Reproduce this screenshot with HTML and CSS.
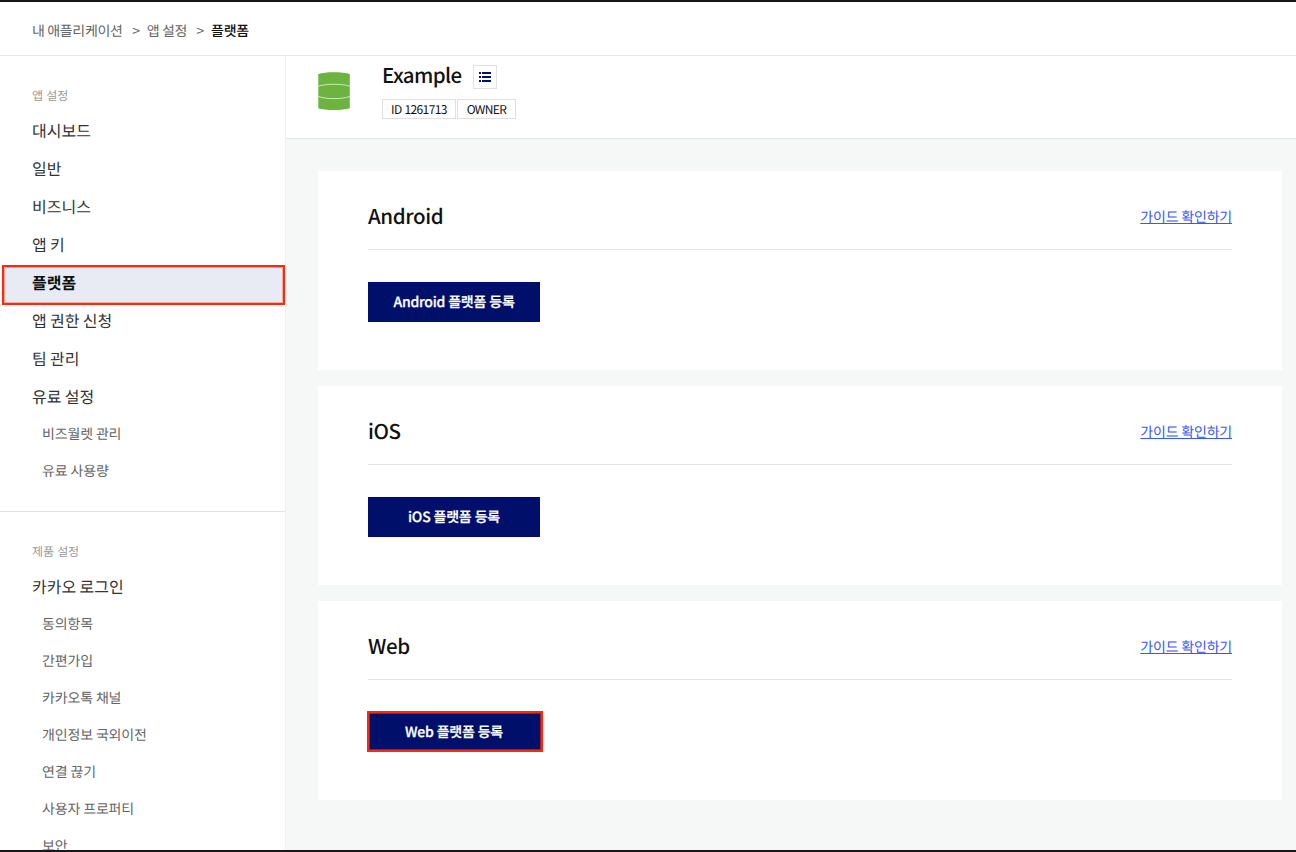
FILE: index.html
```html
<!DOCTYPE html>
<html lang="ko">
<head>
<meta charset="utf-8">
<title>플랫폼</title>
<link rel="stylesheet" href="styles.css">
</head>
<body>
<div class="page">
  <nav class="crumbs">
    <span>내 애플리케이션</span><span class="sep">&gt;</span><span>앱 설정</span><span class="sep">&gt;</span><span class="here">플랫폼</span>
  </nav>
  <div class="body">
    <aside class="side">
      <section class="group">
        <h2 class="label">앱 설정</h2>
        <a class="item">대시보드</a>
        <a class="item">일반</a>
        <a class="item">비즈니스</a>
        <a class="item">앱 키</a>
        <a class="item active"><span>플랫폼</span></a>
        <a class="item">앱 권한 신청</a>
        <a class="item">팀 관리</a>
        <a class="item">유료 설정</a>
        <a class="sub">비즈월렛 관리</a>
        <a class="sub">유료 사용량</a>
      </section>
      <section class="group">
        <h2 class="label">제품 설정</h2>
        <a class="item">카카오 로그인</a>
        <a class="sub">동의항목</a>
        <a class="sub">간편가입</a>
        <a class="sub">카카오톡 채널</a>
        <a class="sub">개인정보 국외이전</a>
        <a class="sub">연결 끊기</a>
        <a class="sub">사용자 프로퍼티</a>
        <a class="sub">보안</a>
      </section>
    </aside>
    <main class="main">
      <header class="app">
        <svg class="logo" width="32" height="40" viewBox="0 0 32 40">
          <path d="M0.3 3C7 .5 25 .5 31.8 3V37.2C25 39.6 7 39.6 0.3 37.2Z" fill="#6cb33f"/>
          <path d="M0.3 15.2C8 12.6 24 12.6 31.8 15.2M0.3 25.4C8 28.4 24 28.4 31.8 25.4" fill="none" stroke="#d3e8c6" stroke-width="1"/>
        </svg>
        <div class="info">
          <div class="name-row">
            <h1 class="name">Example</h1>
            <span class="list-btn">
              <svg width="12" height="10" viewBox="0 0 12 10" fill="#000f69">
                <path d="M0 0h2v2H0zM3 0h9v2H3zM0 4h2v2H0zM3 4h9v2H3zM0 8h2v2H0zM3 8h9v2H3z"/>
              </svg>
            </span>
          </div>
          <div class="tags"><span class="tag tag-id">ID 1261713</span><span class="tag tag-role">OWNER</span></div>
        </div>
      </header>
      <div class="cards">
        <section class="card">
          <div class="card-head"><h2 class="title">Android</h2><a class="guide">가이드 확인하기</a></div>
          <button class="btn">Android 플랫폼 등록</button>
        </section>
        <section class="card">
          <div class="card-head"><h2 class="title">iOS</h2><a class="guide">가이드 확인하기</a></div>
          <button class="btn">iOS 플랫폼 등록</button>
        </section>
        <section class="card">
          <div class="card-head"><h2 class="title">Web</h2><a class="guide">가이드 확인하기</a></div>
          <button class="btn marked">Web 플랫폼 등록</button>
        </section>
      </div>
    </main>
  </div>
</div>
</body>
</html>
```
FILE: styles.css
```css
*, *::before, *::after { box-sizing: border-box; }
body {
  margin: 0;
  font-family: "Noto Sans CJK KR", sans-serif;
  text-rendering: geometricPrecision;
  color: #111;
  background: #fff;
}
h1, h2 { margin: 0; font-weight: 500; }
.page {
  display: flex;
  flex-direction: column;
  height: 852px;
  overflow: hidden;
  border-top: 2px solid #1a1718;
  border-bottom: 2px solid #1a1718;
}
.crumbs {
  display: flex;
  align-items: center;
  flex: 0 0 54px;
  padding: 5px 32px 0;
  border-bottom: 1px solid #e8e8e8;
  font-size: 14px;
  letter-spacing: -0.3px;
  word-spacing: -1px;
  color: #666;
}
.sep { width: 24px; padding-left: 9.5px; }
.here { color: #111; font-weight: 500; }
.body { display: flex; flex: 1; min-height: 0; }
.side {
  flex: 0 0 286px;
  overflow: hidden;
  border-right: 1px solid #eff0f0;
}
.group { display: flex; flex-direction: column; padding-bottom: 22px; }
.group + .group { border-top: 1px solid #e1e1e1; }
.label {
  padding: 30px 32px 5px;
  line-height: 20px;
  font-size: 12px;
  letter-spacing: -0.1px;
  font-weight: 400;
  color: #999;
}
.item {
  height: 38px;
  padding-left: 32px;
  line-height: 39px;
  font-size: 16px;
  word-spacing: -1.2px;
  color: #333;
}
.sub {
  height: 37px;
  padding-left: 42px;
  line-height: 39px;
  font-size: 14px;
  letter-spacing: -0.15px;
  word-spacing: -0.8px;
  color: #666;
}
.active { position: relative; font-weight: 700; color: #111; }
.active span { position: relative; }
.active::before {
  content: "";
  position: absolute;
  left: 2px;
  top: 2px;
  width: 283px;
  height: 40px;
  border: 2px solid #fb2a0c;
  box-shadow: inset 0 0 0 1px rgba(251, 42, 12, 0.35);
  background: #e9ebf4;
}
.main { display: flex; flex-direction: column; flex: 1; background: #f6f8f8; }
.app {
  display: flex;
  gap: 32px;
  height: 83px;
  padding: 6px 32px 0;
  background: #fff;
  border-bottom: 1px solid #e3e4e4;
}
.logo { margin-top: 9px; }
.name-row { display: flex; gap: 11px; }
.name { width: 80px; font-size: 20.5px; line-height: 24px; letter-spacing: -0.6px; }
.list-btn {
  display: grid;
  place-items: center;
  width: 24px;
  height: 24px;
  margin-top: 3px;
  border: 1px solid #e1e1e1;
}
.tags { display: flex; gap: 1px; margin-top: 10px; }
.tag {
  height: 20px;
  padding-top: 1px;
  border: 1px solid #dfdfdf;
  line-height: 18px;
  font-size: 12px;
  letter-spacing: -0.6px;
  text-align: center;
  color: #111;
}
.tag-id { width: 74px; }
.tag-role { width: 59px; }
.cards { display: flex; flex-direction: column; gap: 16px; padding: 32px 14px 0 32px; }
.card { height: 199px; padding: 0 50px; background: #fff; }
.card-head {
  display: flex;
  justify-content: space-between;
  align-items: center;
  height: 79px;
  padding-top: 12px;
  border-bottom: 1px solid #e3e4e4;
}
.title { padding-bottom: 2px; font-size: 20.5px; line-height: 30px; letter-spacing: -0.4px; }
.guide {
  padding-top: 2px;
  font-size: 14px;
  letter-spacing: -0.2px;
  word-spacing: -0.8px;
  color: #3a57f2;
  text-decoration: underline;
}
.btn {
  display: block;
  width: 172px;
  height: 40px;
  margin-top: 32px;
  padding: 0;
  border: 0;
  background: #000f69;
  color: #fff;
  text-rendering: geometricPrecision;
  font: 500 14px/40px "Noto Sans CJK KR", sans-serif;
  letter-spacing: -0.25px;
  word-spacing: -0.5px;
  -webkit-text-stroke: 0.25px #fff;
}
.marked { position: relative; }
.marked::after {
  content: "";
  position: absolute;
  left: -1px;
  top: -1px;
  width: 176px;
  height: 41px;
  border: 2px solid #fb2a0c;
  box-shadow: inset 0 0 0 1px #a81a28;
}
```
